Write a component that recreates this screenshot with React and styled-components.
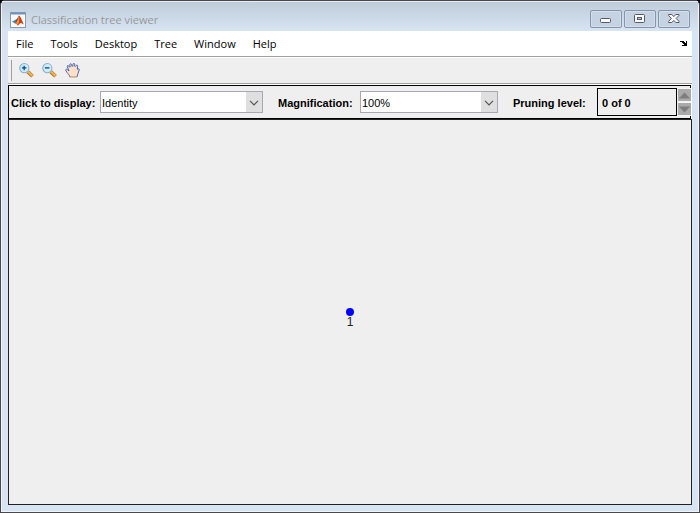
import React from 'react';
import styled, { createGlobalStyle } from 'styled-components';

const GlobalStyle = createGlobalStyle`
  *, *::before, *::after { box-sizing: border-box; }
  html, body { margin: 0; background: #000; }
  button, select { font: inherit; color: inherit; border-radius: 0; }
`;

const Window = styled.div`
  display: flex;
  flex-direction: column;
  min-height: 100vh;
  padding: 0 6px 6px;
  border: 1px solid #4b474b;
  border-radius: 5px 5px 0 0;
  background: #d7e4f2;
  box-shadow: inset 0 0 0 1px #eef5fc;
  font-family: 'Open Sans', 'Noto Sans', sans-serif;
  font-size: 11px;
  color: #000;
`;

const TitleBar = styled.header`
  display: flex;
  align-items: center;
  height: 30px;
  margin: 0 -5px;
  padding: 6px 8px 0 8px;
  gap: 5px;
  border-top: 1px solid #e4ecf5;
  background: linear-gradient(#bfcddb, #d7e4f2);
`;

const Title = styled.h1`
  flex: 1;
  margin: 0;
  font-size: 11px;
  font-weight: 400;
  color: #999;
`;

const WindowControls = styled.div`
  display: flex;
  align-self: flex-start;
  gap: 2px;
  margin-top: 2px;
`;

const CaptionButton = styled.button`
  display: flex;
  align-items: center;
  justify-content: center;
  width: 32px;
  height: 18px;
  padding: 0;
  border: 1px solid #8493ae;
  border-radius: 2px;
  background: #c4d2e2;
  box-shadow: inset 0 0 0 1px #d4dfeb;
`;

const Content = styled.main`
  display: flex;
  flex: 1;
  flex-direction: column;
  margin: 0 1px 1px;
  background: #fff;
`;

const MenuBar = styled.nav`
  display: flex;
  align-items: center;
  height: 26px;
  padding: 0 4px 0 8px;
  border-bottom: 1px solid #a0a0a0;
`;

const MenuButton = styled.button`
  margin-right: 17px;
  padding: 0;
  border: 0;
  background: none;
`;

const DockButton = styled.button`
  display: flex;
  margin-left: auto;
  padding: 0;
  border: 0;
  background: none;
`;

const Toolbar = styled.div`
  display: flex;
  align-items: center;
  height: 26px;
  margin: 1px 0;
  padding-left: 3px;
  gap: 7px;
  border-bottom: 1px solid #a0a0a0;
  background: #efefef;
`;

const Grip = styled.span`
  width: 1px;
  height: 21px;
  background: #a0a0a0;
`;

const ToolButton = styled.button`
  display: flex;
  width: 16px;
  height: 18px;
  padding: 0;
  border: 0;
  background: none;
`;

const OptionBar = styled.div`
  display: grid;
  grid-template-columns: 91px 163fr 97px 138fr 99px 80fr 13px;
  align-items: center;
  height: 34px;
  margin-right: 1px;
  border: 1px solid #000;
  background: #efefef;
  font-family: 'Liberation Sans', Arial, sans-serif;
  font-size: 11px;
`;

const OptionLabel = styled.label`
  padding: 2px 0 0 ${({ $inset }) => $inset}px;
  font-weight: 700;
  white-space: nowrap;
`;

const SelectBox = styled.span`
  display: grid;
  grid-template-columns: 1fr 16px;
  height: 22px;
  border: 1px solid #a9a9b0;
  background: #fff;
`;

const Select = styled.select`
  grid-area: 1 / 1 / 2 / 3;
  appearance: none;
  width: 100%;
  padding: 2px 16px 0 1px;
  border: 0;
  background: none;
`;

const SelectArrow = styled.span`
  grid-area: 1 / 2;
  display: flex;
  align-items: center;
  justify-content: center;
  padding-top: 2px;
  background: #dfdfdf;
  pointer-events: none;
`;

const Level = styled.output`
  height: 28px;
  padding-left: 4px;
  border: 1px solid #000;
  font-weight: 700;
  line-height: 28px;
`;

const Spinner = styled.div`
  display: grid;
  grid-template-rows: 1fr 1fr;
  gap: 2px;
  height: 28px;
  margin: 0 -1px 0 1px;
  padding: 1px 0;
  background: #f4f4f4;
`;

const SpinButton = styled.button`
  display: flex;
  align-items: center;
  justify-content: center;
  padding: 0;
  border: 0;
  background: #aaa;
`;

const TreeCanvas = styled.section`
  display: flex;
  flex: 1;
  align-items: center;
  justify-content: center;
  border: 1px solid #222;
  background: #efefef;
`;

const TreeNode = styled.figure`
  display: flex;
  flex-direction: column;
  align-items: center;
  margin: 0;
  padding-top: 12px;
  font-family: 'Liberation Sans', Arial, sans-serif;
  font-size: 12px;
  line-height: 12px;
  color: #222;
`;

const Dot = styled.span`
  width: 8px;
  height: 8px;
  border-radius: 50%;
  background: #00f;
`;

function AppIcon() {
  return (
    <svg width="16" height="16" viewBox="0 0 16 16" aria-hidden="true">
      <rect x=".5" y=".5" width="15" height="15" fill="#f8fafb" stroke="#8d9aa8" />
      <path d="M1 1.5h14" stroke="#6e94bd" strokeWidth="2" />
      <path d="M2 9.5 5.2 8l2 1.7L5 11.5z" fill="#4389b0" />
      <path d="M5.2 8 7 7l2-3.5-1 4.8-2 2.4z" fill="#275b8b" />
      <path d="M9 3.5c-.8 2-1.7 4.7-4 8 1.2-.4 1.7.5 2.6 2 1.3-.2 2.2-2.5 3.4-2.4L14 12.6C12.3 9.8 10.8 4.2 9 3.5z" fill="#c83e16" />
      <path d="M9 4c-.8 3-1.6 5.2-3.3 7.3.9.1 1.5.9 2 1.7C9.6 10.4 9.5 7 9 4z" fill="#f79237" />
    </svg>
  );
}

function ZoomIcon({ plus }) {
  return (
    <svg width="18" height="18" viewBox="0 0 18 18" aria-hidden="true">
      <path d="m10 10 5.2 5" stroke="#a56b2d" strokeWidth="4" />
      <path d="m10 9.6 5.2 5" stroke="#f4b34c" strokeWidth="2.6" />
      <circle cx="6" cy="5.7" r="5.2" fill="#c9f0fa" stroke="#91a9c6" strokeWidth="1.2" />
      <path d={plus ? 'M3.2 5.5h5.2M5.8 3v5.2' : 'M3.2 5.5h5.2'} stroke="#16438c" strokeWidth="1.5" />
    </svg>
  );
}

function HandIcon() {
  return (
    <svg width="18" height="18" viewBox="0 0 18 18" aria-hidden="true">
      <path
        d="M5.5 15.7c-.2-2-2-3.1-3.2-5L.8 8.2c-.3-1 .9-1.6 1.8-.8L4.5 9 2.6 4.2c-.4-1.4 1-2 1.7-.8L6.2 7 5.4 2c0-1.4 1.7-1.6 2-.3L8.6 6.5 9 1.3c.2-1.2 1.8-1.1 1.9.2l.1 5.3 1.5-3.9c.5-1 2-.5 1.8.7L13.5 8l1.2-1.3c.9-.6 1.8.2 1.3 1.1-1.1 2.5-1.7 5.3-2.5 7.9z"
        fill="#ffdfc5"
      />
      <path
        d="M5.5 15.7c-.2-2-2-3.1-3.2-5L.8 8.2c-.3-1 .9-1.6 1.8-.8L4.5 9 2.6 4.2c-.4-1.4 1-2 1.7-.8L5.2 5M5.8 4.6 5.4 2c0-1.4 1.7-1.6 2-.3L8 4M8.8 4 9 1.3c.2-1.2 1.8-1.1 1.9.2V4M12 4.2l.5-1.3c.5-1 2-.5 1.8.7L13.7 7l1-.3c.9-.6 1.8.2 1.3 1.1-1.1 2.5-1.7 5.3-2.5 7.9"
        fill="none"
        stroke="#3459ad"
      />
      <path d="M5.5 15.7h8" fill="none" stroke="#ad7d5b" />
    </svg>
  );
}

function MinimizeIcon() {
  return (
    <svg width="12" height="12" viewBox="0 0 12 12" aria-hidden="true">
      <rect x=".5" y="5.5" width="10" height="4" rx="1" fill="#fafafa" stroke="#53586b" />
    </svg>
  );
}

function MaximizeIcon() {
  return (
    <svg width="12" height="12" viewBox="0 0 12 12" aria-hidden="true">
      <rect x=".5" y="1.5" width="10" height="8" rx="1" fill="#fafafa" stroke="#53586b" />
      <rect x="3.5" y="4.5" width="4" height="2" fill="#bdcbdd" stroke="#53586b" />
    </svg>
  );
}

function CloseIcon() {
  return (
    <svg width="12" height="12" viewBox="0 0 12 12" aria-hidden="true">
      <path
        d="M.6 1.5h3.2L5.8 3.6l2-2.1H11v1L8.2 5.4l2.8 3v1.1H7.8l-2-2.1-2 2.1H.6V8.4l2.8-3L.6 2.5z"
        fill="#fafafa"
        stroke="#53586b"
      />
    </svg>
  );
}

function DockIcon() {
  return (
    <svg width="8" height="7" viewBox="0 0 8 7" aria-hidden="true" shapeRendering="crispEdges">
      <path d="M0 1h4v1h1v1h1V1h1v5H2V5h2V4H3V3H2V2H0z" />
    </svg>
  );
}

function Arrow({ up }) {
  return (
    <svg width="13" height="7" viewBox="0 0 13 7" aria-hidden="true">
      <path d={up ? 'M.8 6.5 6.5.5 12.2 6.5z' : 'M.8.5 6.5 6.5 12.2.5z'} fill="#7e7e7e" />
    </svg>
  );
}

function Dropdown({ id, value }) {
  return (
    <SelectBox>
      <SelectArrow>
        <svg width="10" height="6" viewBox="0 0 10 6" aria-hidden="true">
          <path d="m1 .8 4 4 4-4" fill="none" stroke="#555" strokeWidth="1.2" />
        </svg>
      </SelectArrow>
      <Select id={id} defaultValue={value}>
        <option>{value}</option>
      </Select>
    </SelectBox>
  );
}

const menus = ['File', 'Tools', 'Desktop', 'Tree', 'Window', 'Help'];

export default function App() {
  return (
    <>
      <GlobalStyle />
      <Window>
        <TitleBar>
          <AppIcon />
          <Title>Classification tree viewer</Title>
          <WindowControls>
            <CaptionButton aria-label="Minimize"><MinimizeIcon /></CaptionButton>
            <CaptionButton aria-label="Maximize"><MaximizeIcon /></CaptionButton>
            <CaptionButton aria-label="Close"><CloseIcon /></CaptionButton>
          </WindowControls>
        </TitleBar>
        <Content>
          <MenuBar>
            {menus.map((name) => <MenuButton key={name}>{name}</MenuButton>)}
            <DockButton aria-label="Dock figure"><DockIcon /></DockButton>
          </MenuBar>
          <Toolbar>
            <Grip />
            <ToolButton aria-label="Zoom in"><ZoomIcon plus /></ToolButton>
            <ToolButton aria-label="Zoom out"><ZoomIcon /></ToolButton>
            <ToolButton aria-label="Pan"><HandIcon /></ToolButton>
          </Toolbar>
          <OptionBar>
            <OptionLabel htmlFor="display" $inset={2}>Click to display:</OptionLabel>
            <Dropdown id="display" value="Identity" />
            <OptionLabel htmlFor="magnification" $inset={15}>Magnification:</OptionLabel>
            <Dropdown id="magnification" value="100%" />
            <OptionLabel htmlFor="level" $inset={15}>Pruning level:</OptionLabel>
            <Level id="level">0 of 0</Level>
            <Spinner>
              <SpinButton aria-label="Increase pruning level"><Arrow up /></SpinButton>
              <SpinButton aria-label="Decrease pruning level"><Arrow /></SpinButton>
            </Spinner>
          </OptionBar>
          <TreeCanvas>
            <TreeNode>
              <Dot />
              <figcaption>1</figcaption>
            </TreeNode>
          </TreeCanvas>
        </Content>
      </Window>
    </>
  );
}
